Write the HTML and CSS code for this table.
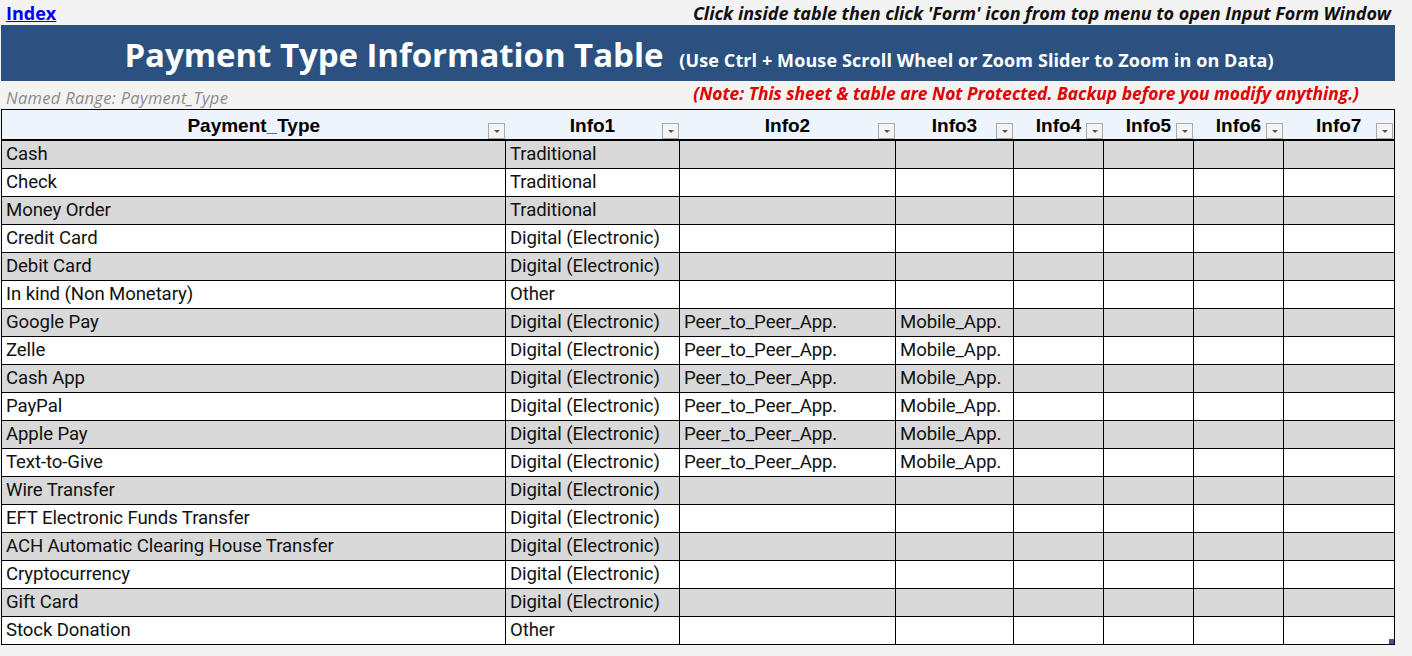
FILE: index.html
```html
<!DOCTYPE html>
<html>
<head>
<meta charset="utf-8">
<link rel="stylesheet" href="styles.css">
</head>
<body>
<div class="sheet">
  <div class="toprow">
    <a class="index-link" href="#">Index</a>
    <span class="instruction">Click inside table then click 'Form' icon from top menu to open Input Form Window</span>
  </div>
  <div class="titlebar">
    <span class="title">Payment Type Information Table</span>
    <span class="subtitle">(Use Ctrl + Mouse Scroll Wheel or Zoom Slider to Zoom in on Data)</span>
  </div>
  <div class="noterow">
    <span class="named">Named Range: Payment_Type</span>
    <span class="note">(Note: This sheet &amp; table are Not Protected. Backup before you modify anything.)</span>
  </div>
  <table class="grid">
    <colgroup>
      <col class="c0"><col class="c1"><col class="c2"><col class="c3"><col class="c4"><col class="c5"><col class="c6"><col class="c7">
    </colgroup>
    <thead>
      <tr>
        <th>Payment_Type<span class="dd"></span></th>
        <th>Info1<span class="dd"></span></th>
        <th>Info2<span class="dd"></span></th>
        <th>Info3<span class="dd"></span></th>
        <th>Info4<span class="dd"></span></th>
        <th>Info5<span class="dd"></span></th>
        <th>Info6<span class="dd"></span></th>
        <th>Info7<span class="dd"></span></th>
      </tr>
    </thead>
    <tbody>
      <tr><td>Cash</td><td>Traditional</td><td></td><td></td><td></td><td></td><td></td><td></td></tr>
      <tr><td>Check</td><td>Traditional</td><td></td><td></td><td></td><td></td><td></td><td></td></tr>
      <tr><td>Money Order</td><td>Traditional</td><td></td><td></td><td></td><td></td><td></td><td></td></tr>
      <tr><td>Credit Card</td><td>Digital (Electronic)</td><td></td><td></td><td></td><td></td><td></td><td></td></tr>
      <tr><td>Debit Card</td><td>Digital (Electronic)</td><td></td><td></td><td></td><td></td><td></td><td></td></tr>
      <tr><td>In kind (Non Monetary)</td><td>Other</td><td></td><td></td><td></td><td></td><td></td><td></td></tr>
      <tr><td>Google Pay</td><td>Digital (Electronic)</td><td>Peer_to_Peer_App.</td><td>Mobile_App.</td><td></td><td></td><td></td><td></td></tr>
      <tr><td>Zelle</td><td>Digital (Electronic)</td><td>Peer_to_Peer_App.</td><td>Mobile_App.</td><td></td><td></td><td></td><td></td></tr>
      <tr><td>Cash App</td><td>Digital (Electronic)</td><td>Peer_to_Peer_App.</td><td>Mobile_App.</td><td></td><td></td><td></td><td></td></tr>
      <tr><td>PayPal</td><td>Digital (Electronic)</td><td>Peer_to_Peer_App.</td><td>Mobile_App.</td><td></td><td></td><td></td><td></td></tr>
      <tr><td>Apple Pay</td><td>Digital (Electronic)</td><td>Peer_to_Peer_App.</td><td>Mobile_App.</td><td></td><td></td><td></td><td></td></tr>
      <tr><td>Text-to-Give</td><td>Digital (Electronic)</td><td>Peer_to_Peer_App.</td><td>Mobile_App.</td><td></td><td></td><td></td><td></td></tr>
      <tr><td>Wire Transfer</td><td>Digital (Electronic)</td><td></td><td></td><td></td><td></td><td></td><td></td></tr>
      <tr><td>EFT Electronic Funds Transfer</td><td>Digital (Electronic)</td><td></td><td></td><td></td><td></td><td></td><td></td></tr>
      <tr><td>ACH Automatic Clearing House Transfer</td><td>Digital (Electronic)</td><td></td><td></td><td></td><td></td><td></td><td></td></tr>
      <tr><td>Cryptocurrency</td><td>Digital (Electronic)</td><td></td><td></td><td></td><td></td><td></td><td></td></tr>
      <tr><td>Gift Card</td><td>Digital (Electronic)</td><td></td><td></td><td></td><td></td><td></td><td></td></tr>
      <tr><td>Stock Donation</td><td>Other</td><td></td><td></td><td></td><td></td><td></td><td class="last"><span class="handle"></span></td></tr>
    </tbody>
  </table>
</div>
</body>
</html>
```

FILE: styles.css
```css
html, body {
  margin: 0;
  padding: 0;
  background: #f3f3f3;
}
.sheet {
  width: 1394px;
  margin-left: 1px;
  font-family: "Roboto", "Liberation Sans", sans-serif;
}
.toprow {
  height: 25px;
  display: flex;
  justify-content: space-between;
  align-items: center;
}
.index-link {
  color: #0000ee;
  font-weight: bold;
  font-size: 18px;
  margin-left: 5px;
  text-decoration: underline;
  font-family: "Open Sans", sans-serif;
}
.instruction {
  font-weight: bold;
  font-style: italic;
  font-size: 18px;
  color: #111;
  margin-right: 4px;
  font-family: "Open Sans", sans-serif;
  letter-spacing: -0.05px;
}
.titlebar {
  height: 56px;
  background: #2a5180;
  color: #fff;
  display: flex;
  justify-content: center;
  align-items: baseline;
  gap: 16px;
  font-family: "Open Sans", sans-serif;
  box-sizing: border-box;
  padding-top: 7px;
  padding-left: 2px;
}
.title {
  font-size: 33px;
  font-weight: bold;
  letter-spacing: -0.05px;
}
.subtitle {
  font-size: 18px;
  font-weight: bold;
  letter-spacing: 0.1px;
}
.noterow {
  height: 28px;
  display: flex;
  justify-content: space-between;
  align-items: flex-start;
  font-family: "Open Sans", sans-serif;
}
.named {
  color: #8c8c8c;
  font-style: italic;
  font-size: 16.5px;
  margin-left: 5px;
  padding-top: 5px;
  letter-spacing: 0.3px;
}
.note {
  color: #e00000;
  font-weight: bold;
  font-style: italic;
  font-size: 17.4px;
  margin-right: 36px;
}
.grid {
  border-collapse: collapse;
  table-layout: fixed;
  width: 1394px;
  background: #fff;
}
.c0 { width: 504px; }
.c1 { width: 174px; }
.c2 { width: 216px; }
.c3 { width: 118px; }
.c4 { width: 90px; }
.c5 { width: 90px; }
.c6 { width: 90px; }
.c7 { width: 111px; }
.grid th {
  position: relative;
  height: 27px;
  padding: 2px 0 0 0;
  background: #eef4fb;
  border-top: 1px solid #000;
  border-bottom: 2px solid #000;
  font-family: "Liberation Sans", Arial, sans-serif;
  font-weight: bold;
  font-size: 19px;
  text-align: center;
  color: #000;
}
.grid th:first-child { border-left: 1px solid #000; }
.grid th:last-child { border-right: 1px solid #000; }
.dd {
  position: absolute;
  right: 1px;
  bottom: 0px;
  width: 15px;
  height: 14px;
  border: 1px solid #a9a9a9;
  background: #f4f4f4;
}
.dd::after {
  content: "";
  position: absolute;
  left: 5px;
  top: 6px;
  border-left: 3px solid transparent;
  border-right: 3px solid transparent;
  border-top: 3px solid #555;
}
.grid td {
  height: 27px;
  padding: 0 0 0 4px;
  border: 1px solid #000;
  font-size: 18.6px;
  color: #111;
  white-space: nowrap;
  overflow: hidden;
  line-height: 27px;
  letter-spacing: -0.1px;
}
.grid tbody tr:nth-child(odd) td { background: #d9d9d9; }
.grid td.last { position: relative; }
.handle {
  position: absolute;
  right: 0;
  bottom: 0;
  width: 5px;
  height: 5px;
  background: #44558f;
}
```
